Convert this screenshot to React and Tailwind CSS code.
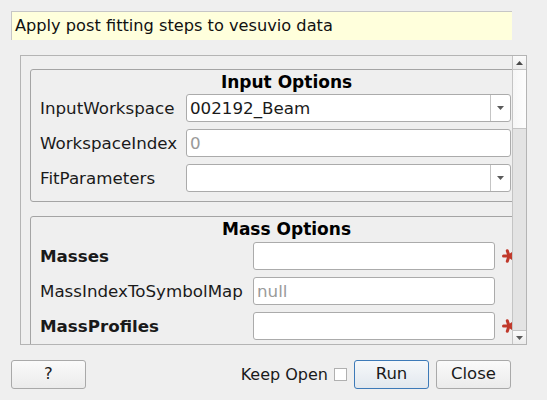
const FONT = { fontFamily: '"DejaVu Sans", "Liberation Sans", sans-serif' };

function Arrow({ up }) {
  return (
    <svg width="7" height="4" viewBox="0 0 7 4" className="block">
      {up ? <path d="M0 4 L3.5 0 L7 4 Z" fill="#4a4a4a" /> : <path d="M0 0 L7 0 L3.5 4 Z" fill="#5a5a5a" />}
    </svg>
  );
}

// five-armed red "required" marker
function Asterisk() {
  const arms = [180, 108, 36, -36, -108];
  return (
    <svg width="14" height="14" viewBox="0 0 14 14" className="block shrink-0">
      <g stroke="#c0392b" strokeWidth="3" strokeLinecap="round">
        {arms.map((a) => {
          const r = (a * Math.PI) / 180;
          return <line key={a} x1="7" y1="7" x2={7 + 5.5 * Math.cos(r)} y2={7 + 5.5 * Math.sin(r)} />;
        })}
      </g>
    </svg>
  );
}

function Field({ value, placeholder, width, combo }) {
  return (
    <div
      className="flex h-[28px] shrink-0 items-center rounded-[3px] border border-[#ababab] bg-white"
      style={{ width }}
    >
      <div className="flex-1 truncate pl-[3px] text-[16.7px] leading-[22px]">
        {value ? <span className="text-[#1a1a1a]">{value}</span> : <span className="text-[#9a9a9a]">{placeholder}</span>}
      </div>
      {combo && (
        <div className="flex h-full w-[20px] items-center justify-center border-l border-[#c4c4c4]">
          <Arrow />
        </div>
      )}
    </div>
  );
}

function Row({ label, bold, labelW, children }) {
  return (
    <div className="flex h-[28px] items-center">
      <div
        className={`shrink-0 whitespace-nowrap text-[16.7px] leading-[22px] text-[#1a1a1a] ${bold ? "font-bold" : ""}`}
        style={{ width: labelW }}
      >
        {label}
      </div>
      {children}
    </div>
  );
}

function Group({ title, titleGap, children }) {
  return (
    <div className="w-[504px] shrink-0 rounded-[3px] border border-[#a4a4a4] pb-[9px] pl-[9px]">
      <div className="mt-[3px] h-[19px] whitespace-nowrap text-center text-[17px] font-bold leading-[19px] text-black">
        {title}
      </div>
      <div className="flex flex-col gap-[7px]" style={{ marginTop: titleGap }}>
        {children}
      </div>
    </div>
  );
}

function Button({ children, primary, className = "" }) {
  return (
    <button
      className={`h-[29px] w-[75px] rounded-[3px] border text-[16.5px] leading-none text-[#1a1a1a] ${
        primary
          ? "border-[#3d7ab8] bg-gradient-to-b from-[#f6f8fa] to-[#e2e8ee]"
          : "border-[#a9a9a9] bg-gradient-to-b from-[#fafafa] to-[#ebebeb]"
      } ${className}`}
    >
      {children}
    </button>
  );
}

export default function App() {
  return (
    <div className="h-[400px] w-[547px] overflow-hidden bg-[#efefef]" style={FONT}>
      {/* description */}
      <div className="ml-[11px] pt-[11px]">
        <div className="flex h-[29px] w-[501px] items-center border-l border-t border-[#c6c6c6] bg-[#ffffdc] pl-[3px] text-[16.2px] leading-none text-[#111]">
          Apply post fitting steps to vesuvio data
        </div>
      </div>

      {/* scroll area */}
      <div className="ml-[20px] mt-[15px] flex h-[290px] w-[507px] border border-[#b4b4b4]">
        <div className="h-full w-[491px] overflow-hidden">
          <div className="flex w-[520px] flex-col pl-[9px] pt-[13px]">
            <Group title="Input Options" titleGap="2px">
              <Row label="InputWorkspace" labelW="146px">
                <Field value="002192_Beam" width="325px" combo />
              </Row>
              <Row label="WorkspaceIndex" labelW="146px">
                <Field placeholder="0" width="325px" />
              </Row>
              <Row label="FitParameters" labelW="146px">
                <Field width="325px" combo />
              </Row>
            </Group>
            <div className="mt-[14px]">
              <Group title="Mass Options" titleGap="3px">
                <Row label="Masses" bold labelW="213px">
                  <Field width="242px" />
                  <div className="ml-[7px]">
                    <Asterisk />
                  </div>
                </Row>
                <Row label="MassIndexToSymbolMap" labelW="213px">
                  <Field placeholder="null" width="242px" />
                </Row>
                <Row label="MassProfiles" bold labelW="213px">
                  <Field width="242px" />
                  <div className="ml-[7px]">
                    <Asterisk />
                  </div>
                </Row>
              </Group>
            </div>
          </div>
        </div>
        {/* scrollbar */}
        <div className="flex h-full w-[14px] flex-col border-l border-[#c4c4c4] bg-[#e3e3e3]">
          <div className="flex h-[14px] items-center justify-center border-b border-[#c4c4c4] bg-gradient-to-b from-[#fbfbfb] to-[#ececec]">
            <Arrow up />
          </div>
          <div className="h-[59px] border-b border-[#c4c4c4] bg-gradient-to-r from-[#f6f6f6] to-[#fdfdfd]" />
          <div className="flex-1" />
          <div className="flex h-[14px] items-center justify-center border-t border-[#c4c4c4] bg-gradient-to-b from-[#fbfbfb] to-[#ececec]">
            <Arrow />
          </div>
        </div>
      </div>

      {/* buttons */}
      <div className="mt-[15px] flex items-center pl-[11px]">
        <Button>?</Button>
        <div className="flex-1" />
        <span className="text-[16px] leading-none text-[#1a1a1a]">Keep Open</span>
        <div className="ml-[6px] h-[13px] w-[13px] border border-[#b0b0b0] bg-white" />
        <Button primary className="ml-[7px]">Run</Button>
        <Button className="ml-[7px] mr-[36px]">Close</Button>
      </div>
    </div>
  );
}
